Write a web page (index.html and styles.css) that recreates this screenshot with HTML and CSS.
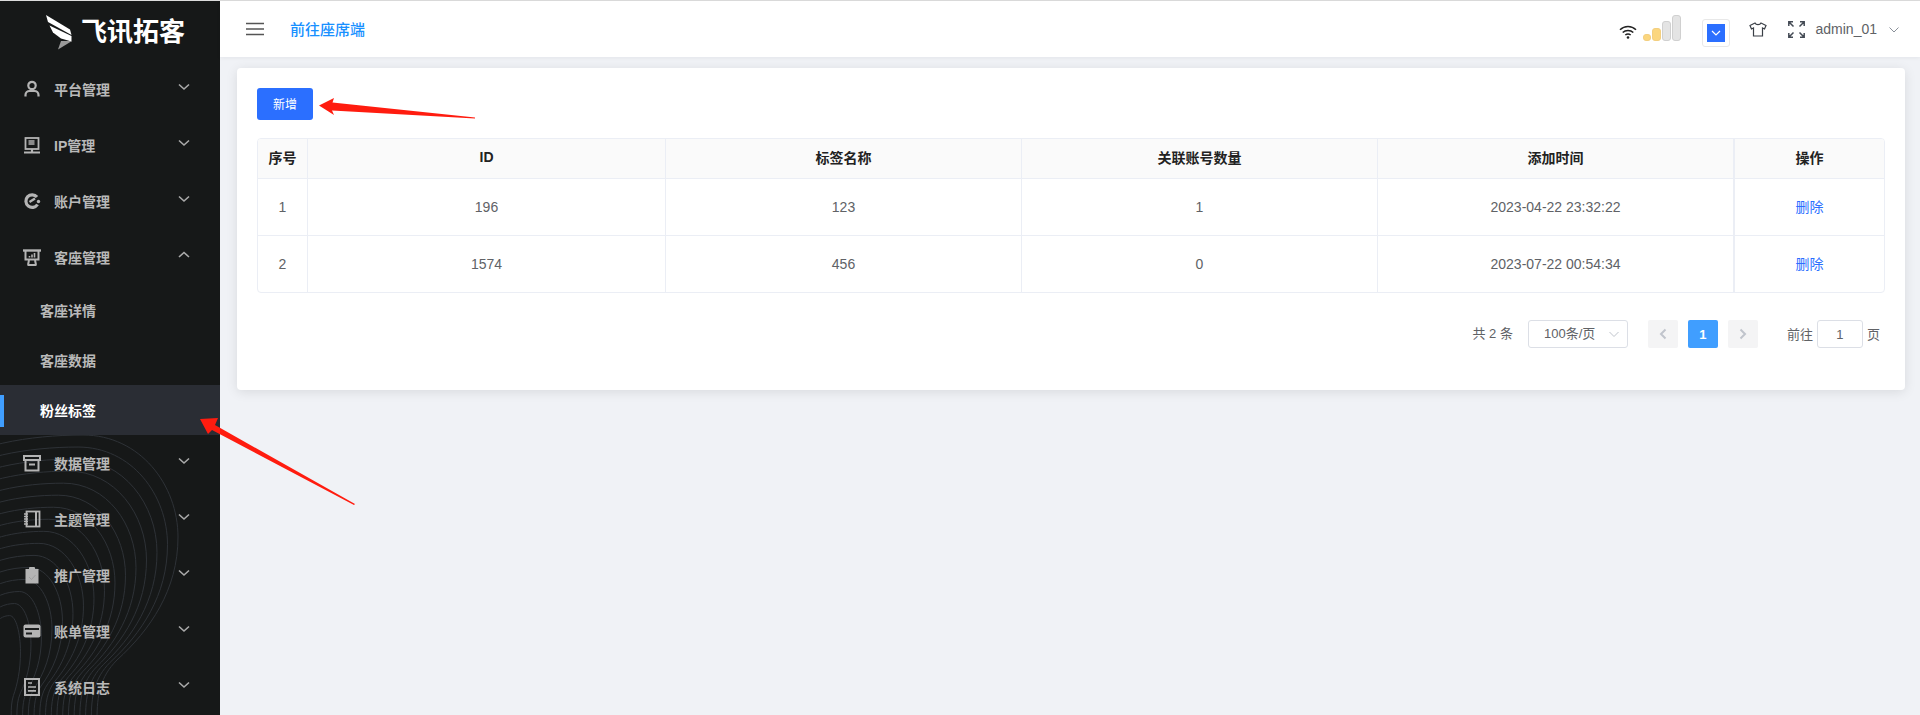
FILE: index.html
```html
<!DOCTYPE html>
<html lang="zh-CN">
<head>
<meta charset="utf-8">
<title>粉丝标签</title>
<link rel="stylesheet" href="styles.css">
</head>
<body>
<div class="app">
  <aside class="sidebar">
    <svg class="pattern" width="220" height="715" viewBox="0 0 220 715" fill="none" stroke="#2e3237" stroke-width="1">
      <defs><path id="contour" vector-effect="non-scaling-stroke" d="M-60 -245C-30 -270 30 -280 83 -280C140 -280 178 -230 178 -178C178 -125 150 -85 117 -55C100 -38 97 -20 97 5"/></defs>
      <use href="#contour" transform="translate(0 715) scale(1 1)"/>
      <use href="#contour" transform="translate(0 715) scale(.941 .957)"/>
      <use href="#contour" transform="translate(0 715) scale(.882 .914)"/>
      <use href="#contour" transform="translate(0 715) scale(.823 .871)"/>
      <use href="#contour" transform="translate(0 715) scale(.764 .828)"/>
      <use href="#contour" transform="translate(0 715) scale(.705 .785)"/>
      <use href="#contour" transform="translate(0 715) scale(.646 .742)"/>
      <use href="#contour" transform="translate(0 715) scale(.587 .699)"/>
      <use href="#contour" transform="translate(0 715) scale(.528 .656)"/>
      <use href="#contour" transform="translate(0 715) scale(.469 .613)"/>
      <use href="#contour" transform="translate(0 715) scale(.41 .57)"/>
      <use href="#contour" transform="translate(0 715) scale(.351 .527)"/>
      <use href="#contour" transform="translate(0 715) scale(.292 .484)"/>
      <use href="#contour" transform="translate(0 715) scale(.233 .441)"/>
      <use href="#contour" transform="translate(0 715) scale(.174 .398)"/>
      <use href="#contour" transform="translate(0 715) scale(.115 .355)"/>
    </svg>
    <div class="logo">
      <svg class="logo-mark" width="28" height="36" viewBox="0 0 28 36">
        <path fill="#fff" d="M0 0L24 14.5L25.5 20L2 7Z"/>
        <path fill="#fff" d="M3.5 10.5L25.5 21L25.5 26.5L15 23.5L7 17.5Z"/>
        <path fill="#9a9a9a" d="M12 34.500L15 26L26 26Z"/>
      </svg>
      <span class="logo-text">飞讯拓客</span>
    </div>
    <nav class="menu">
      <a class="item">
        <svg class="ic" viewBox="0 0 18 18" fill="none" stroke="#b4b4b4" stroke-width="2.200"><circle cx="9" cy="5.500" r="3.700"/><path d="M2.500 16.500V15c0-2.500 2-4 4-4h5c2 0 4 1.500 4 4v1.500"/></svg>
        <span>平台管理</span>
        <svg class="chev" viewBox="0 0 12 8" fill="none" stroke="#aaa" stroke-width="1.600"><path d="M1 1.500l5 4.500 5-4.500"/></svg>
      </a>
      <a class="item">
        <svg class="ic" viewBox="0 0 18 18" fill="none" stroke="#b4b4b4" stroke-width="1.800"><rect x="2.500" y="2" width="13" height="11"/><rect x="5.500" y="4" width="6" height="5" fill="#8a8a8a" stroke="none"/><path d="M9 13v3M1 16.500h16" stroke-width="2.200"/></svg>
        <span>IP管理</span>
        <svg class="chev" viewBox="0 0 12 8" fill="none" stroke="#aaa" stroke-width="1.600"><path d="M1 1.500l5 4.500 5-4.500"/></svg>
      </a>
      <a class="item">
        <svg class="ic" viewBox="0 0 18 18" fill="none" stroke="#b4b4b4" stroke-width="3.200"><path d="M14 5A6.300 6.300 0 1 0 14.500 12.500"/><path d="M6.500 10L12 6.500" stroke-width="2.400"/><circle cx="15.500" cy="9.500" r="1.700" fill="#b4b4b4" stroke="none"/></svg>
        <span>账户管理</span>
        <svg class="chev" viewBox="0 0 12 8" fill="none" stroke="#aaa" stroke-width="1.600"><path d="M1 1.500l5 4.500 5-4.500"/></svg>
      </a>
      <a class="item">
        <svg class="ic" viewBox="0 0 18 18" fill="none" stroke="#b4b4b4" stroke-width="2"><path d="M0 2.500h18" stroke-width="2.400"/><path d="M2.500 2.500v9h13v-9"/><path d="M6 12l-1 5M12 12l1 5M4.500 17h9"/><path d="M6.500 9.500V8M9 9.500V6.500M11.500 9.500V5" stroke-width="1.600"/></svg>
        <span>客座管理</span>
        <svg class="chev" viewBox="0 0 12 8" fill="none" stroke="#aaa" stroke-width="1.600"><path d="M1 6l5-4.500L11 6"/></svg>
      </a>
      <a class="sub">客座详情</a>
      <a class="sub">客座数据</a>
      <a class="sub active">粉丝标签</a>
      <a class="item">
        <svg class="ic" viewBox="0 0 18 18" fill="none" stroke="#b4b4b4" stroke-width="2"><rect x="1" y="2" width="16" height="4"/><path d="M2.500 6v10.500h13V6M6 10.500h6"/></svg>
        <span>数据管理</span>
        <svg class="chev" viewBox="0 0 12 8" fill="none" stroke="#aaa" stroke-width="1.600"><path d="M1 1.500l5 4.500 5-4.500"/></svg>
      </a>
      <a class="item">
        <svg class="ic" viewBox="0 0 18 18" fill="none" stroke="#b4b4b4" stroke-width="1.800"><rect x="3.500" y="1.500" width="13" height="15"/><path d="M13 1.500v15" stroke-width="2"/><path d="M1 4h4M1 6.500h4M1 9h4M1 11.500h4M1 14h4" stroke-width="1.300"/></svg>
        <span>主题管理</span>
        <svg class="chev" viewBox="0 0 12 8" fill="none" stroke="#aaa" stroke-width="1.600"><path d="M1 1.500l5 4.500 5-4.500"/></svg>
      </a>
      <a class="item">
        <svg class="ic" viewBox="0 0 18 18"><rect x="2.500" y="3" width="13" height="14.500" fill="#b4b4b4"/><rect x="6" y="1" width="6" height="4" rx="1" fill="#b4b4b4"/><path d="M6 11l2.500 2.500L12.500 9" fill="none" stroke="#999" stroke-width=".8"/></svg>
        <span>推广管理</span>
        <svg class="chev" viewBox="0 0 12 8" fill="none" stroke="#aaa" stroke-width="1.600"><path d="M1 1.500l5 4.500 5-4.500"/></svg>
      </a>
      <a class="item">
        <svg class="ic" viewBox="0 0 18 18"><rect x="0.500" y="2.500" width="17" height="13" rx="2" fill="#b4b4b4"/><path d="M2 7h14M3 11.500h6" fill="none" stroke="#1a1c1c" stroke-width="1.800"/></svg>
        <span>账单管理</span>
        <svg class="chev" viewBox="0 0 12 8" fill="none" stroke="#aaa" stroke-width="1.600"><path d="M1 1.500l5 4.500 5-4.500"/></svg>
      </a>
      <a class="item">
        <svg class="ic" viewBox="0 0 18 18" fill="none" stroke="#b4b4b4" stroke-width="2"><rect x="2" y="1" width="14" height="16"/><path d="M5 5h4M5 9h8M5 12.800h8" stroke-width="1.700"/></svg>
        <span>系统日志</span>
        <svg class="chev" viewBox="0 0 12 8" fill="none" stroke="#aaa" stroke-width="1.600"><path d="M1 1.500l5 4.500 5-4.500"/></svg>
      </a>
    </nav>
  </aside>

  <div class="right">
    <header class="topbar">
      <svg class="burger" width="18" height="14" viewBox="0 0 18 14" fill="none" stroke="#555" stroke-width="1.600"><path d="M0 1.500h18M0 7h18M0 12.500h18"/></svg>
      <a class="goto">前往座席端</a>
      <div class="tools">
        <svg class="wifi" width="18" height="14" viewBox="0 0 18 14" fill="none" stroke="#222" stroke-width="1.500"><path d="M1 4.800C5.500 .4 12.500 .4 17 4.800M3.700 7.500C6.500 4.800 11.500 4.800 14.300 7.500M6.300 10C7.800 8.800 10.200 8.800 11.700 10"/><circle cx="9" cy="12.500" r="1.300" fill="#222" stroke="none"/></svg>
        <div class="signal">
          <i class="bar b1"></i><i class="bar b2"></i><i class="bar b3"></i><i class="bar b4"></i>
        </div>
        <div class="color-pick">
          <div class="swatch"><svg width="10" height="6" viewBox="0 0 10 6" fill="none" stroke="#fff" stroke-width="1.200"><path d="M1 1l4 4 4-4"/></svg></div>
        </div>
        <svg class="shirt" width="18" height="15" viewBox="0 0 18 15" fill="#fff" stroke="#3a3f46" stroke-width="1.200"><path d="M6 1L1 3.500 2.500 7 4.500 6V14h9V6l2 1L17 3.500 12 1C11 3.200 7 3.200 6 1Z"/></svg>
        <svg class="full" width="17" height="17" viewBox="0 0 17 17" fill="none" stroke="#444b55" stroke-width="1.500"><path d="M.8 5V.8H5M12 .8h4.200V5M.8 12v4.200H5M12 16.200h4.200V12M1 1l4.500 4.500M16 1l-4.500 4.500M1 16l4.500-4.500M16 16l-4.500-4.500"/></svg>
        <span class="user">admin_01</span>
        <svg class="user-chev" width="10" height="6" viewBox="0 0 10 6" fill="none" stroke="#8a9099" stroke-width="1"><path d="M.5 .5L5 5 9.500 .5"/></svg>
      </div>
    </header>

    <main class="main">
      <section class="card">
        <button class="btn-add">新增</button>
        <div class="table-wrap">
          <table class="grid">
            <colgroup>
              <col class="c-idx"><col class="c-id"><col class="c-std"><col class="c-std"><col class="c-std"><col class="c-op">
            </colgroup>
            <thead>
              <tr><th>序号</th><th>ID</th><th>标签名称</th><th>关联账号数量</th><th class="fixed-edge">添加时间</th><th class="fixed">操作</th></tr>
            </thead>
            <tbody>
              <tr><td>1</td><td>196</td><td>123</td><td>1</td><td class="fixed-edge">2023-04-22 23:32:22</td><td class="fixed op"><a class="link">删除</a></td></tr>
              <tr class="last"><td>2</td><td>1574</td><td>456</td><td>0</td><td class="fixed-edge">2023-07-22 00:54:34</td><td class="fixed op"><a class="link">删除</a></td></tr>
            </tbody>
          </table>
        </div>
        <div class="pager">
          <span class="total">共 2 条</span>
          <div class="size">
            <span>100条/页</span>
            <svg width="12" height="7" viewBox="0 0 12 7" fill="none" stroke="#c0c4cc" stroke-width="1"><path d="M1.500 1L6 5.500 10.500 1"/></svg>
          </div>
          <span class="pg"><svg width="8" height="12" viewBox="0 0 8 12" fill="none" stroke="#c0c4cc" stroke-width="2"><path d="M6.500 1.500L2 6l4.500 4.500"/></svg></span>
          <span class="pg on">1</span>
          <span class="pg pg-last"><svg width="8" height="12" viewBox="0 0 8 12" fill="none" stroke="#c0c4cc" stroke-width="2"><path d="M1.500 1.500L6 6l-4.500 4.500"/></svg></span>
          <span class="jump">前往</span>
          <span class="jump-box">1</span>
          <span class="jump-end">页</span>
        </div>
      </section>
    </main>
  </div>

  <svg class="arrows" width="1920" height="715" viewBox="0 0 1920 715" fill="#ff1c0f">
    <polygon points="319,105.500 334,98 332.500,102.500 475,117.500 475,118.500 332,110.500 334,115"/>
    <polygon points="200,419 218,418 215,425 355,504 354,505 212,430 208,434"/>
  </svg>
</div>
</body>
</html>
```
FILE: styles.css
```css
* { box-sizing: border-box; }
html, body { margin: 0; height: 100%; }
body {
  font-family: "Liberation Sans", "Noto Sans CJK SC", sans-serif;
  font-size: 14px;
  color: #606266;
  background: #f0f2f6;
  overflow: hidden;
}
a { text-decoration: none; }

.app {
  position: relative;
  display: flex;
  height: 715px;
  border-top: 1px solid #dcdcdc;
}

/* sidebar */
.sidebar {
  position: relative;
  flex: 0 0 220px;
  background: #161818;
  overflow: hidden;
}
.pattern { position: absolute; left: 0; top: -1px; }
.logo {
  position: relative;
  height: 60px;
  display: flex;
  align-items: center;
  padding-left: 46px;
}
.logo-mark { flex: none; margin-top: 3px; }
.logo-text {
  margin-left: 7px;
  color: #fff;
  font-size: 26px;
  font-weight: 700;
  line-height: 1;
  margin-top: 1px;
  white-space: nowrap;
}
.menu { position: relative; }
.item, .sub {
  display: flex;
  align-items: center;
  color: #b9b9b9;
  font-weight: 700;
  font-size: 14px;
  white-space: nowrap;
}
.item { height: 56px; padding-left: 23px; }
.ic { width: 18px; height: 18px; flex: none; margin-right: 13px; }
.chev { width: 12px; height: 8px; flex: none; margin-left: auto; margin-right: 30px; margin-bottom: 4px; }
.sub { height: 50px; padding-left: 40px; position: relative; }
.sub.active { background: #2a2d34; color: #fff; }
.sub.active::before {
  content: "";
  position: absolute;
  left: 0;
  top: 10px;
  width: 4px;
  height: 32px;
  background: #409eff;
}

/* right */
.right { flex: 1; min-width: 0; display: flex; flex-direction: column; }
.topbar {
  position: relative;
  height: 56px;
  flex: none;
  background: #fff;
  display: flex;
  align-items: center;
  padding-left: 26px;
  box-shadow: 0 1px 4px rgba(0, 21, 41, .06);
}
.burger { flex: none; }
.goto { margin-left: 26px; color: #1890ff; font-size: 15px; font-weight: 500; padding-bottom: 2px; }
.tools { margin-left: auto; display: flex; align-items: center; padding-right: 21px; }
.wifi { flex: none; margin-top: 5px; }
.signal { display: flex; align-items: flex-end; gap: 1px; height: 26px; margin-left: 6px; margin-top: -3px; }
.bar { display: block; width: 9px; border-radius: 3px; border: 1px solid #d0d0d0; background: #e4e4e4; }
.b1 { height: 7px; width: 8px; background: #fbd67e; border-color: #f3cf80; }
.b2 { height: 13px; background: #fbd67e; border-color: #f3cf80; }
.b3 { height: 20px; }
.b4 { height: 26px; }
.color-pick {
  margin-left: 21px;
  width: 28px;
  height: 28px;
  border: 1px solid #e8e8e8;
  border-radius: 3px;
  display: flex;
  align-items: center;
  justify-content: center;
  margin-top: 8px;
}
.swatch {
  width: 18px;
  height: 18px;
  background: #2b6fff;
  display: flex;
  align-items: center;
  justify-content: center;
}
.shirt { flex: none; margin-left: 19px; }
.full { flex: none; margin-left: 21px; }
.user { margin-left: 11px; font-size: 14px; color: #606266; }
.user-chev { flex: none; margin-left: 12px; margin-top: 1px; }

.main { flex: 1; padding: 11px 15px 0 17px; }
.card {
  background: #fff;
  border-radius: 4px;
  padding: 20px 20px 42px;
  box-shadow: 0 2px 12px rgba(0, 0, 0, .1);
}
.btn-add {
  display: block;
  width: 56px;
  height: 32px;
  padding: 0 0 2px;
  border: 0;
  border-radius: 3px;
  background: #2b6fff;
  color: #fff;
  font-family: inherit;
  font-size: 12px;
  margin-bottom: 18px;
}
.table-wrap { border: 1px solid #ebeef5; border-radius: 4px; overflow: hidden; }
.grid { width: 100%; table-layout: fixed; border-collapse: separate; border-spacing: 0; }
.c-idx { width: 50px; }
.c-id { width: 358px; }
.c-std { width: 356px; }
.c-op { width: 150px; }
.grid th, .grid td {
  padding: 0;
  text-align: center;
  border-right: 1px solid #ebeef5;
  border-bottom: 1px solid #ebeef5;
}
.grid th {
  height: 40px;
  padding-bottom: 3px;
  background: #fafafa;
  color: #222;
  font-weight: 700;
  font-size: 14px;
}
.grid td { height: 57px; color: #606266; font-size: 14px; }
.grid .last td { height: 56px; border-bottom: 0; }
.grid .fixed { border-right: 0; border-left: 1px solid #ebeef5; }
.grid .op { padding-bottom: 3px; }
.link { color: #2b6fff; }

.pager {
  display: flex;
  justify-content: flex-end;
  align-items: center;
  height: 28px;
  margin-top: 27px;
  padding-right: 5px;
  font-size: 13px;
  color: #606266;
}
.total { margin-right: 15px; padding-bottom: 3px; }
.size {
  width: 100px;
  height: 28px;
  border: 1px solid #dcdfe6;
  border-radius: 3px;
  display: flex;
  align-items: center;
  justify-content: space-between;
  padding: 0 7px 0 15px;
  margin-right: 20px;
}
.size span { padding-bottom: 3px; }
.pg {
  width: 30px;
  height: 28px;
  border-radius: 2px;
  background: #f4f4f5;
  display: flex;
  align-items: center;
  justify-content: center;
  margin-right: 10px;
  font-weight: 700;
}
.pg.on { background: #409eff; color: #fff; }
.pg-last { margin-right: 29px; }
.jump { margin-right: 4px; padding-bottom: 2px; }
.jump-end { padding-bottom: 2px; }
.jump-box {
  width: 46px;
  height: 28px;
  border: 1px solid #dcdfe6;
  border-radius: 3px;
  display: flex;
  align-items: center;
  justify-content: center;
  margin-right: 4px;
}

.arrows { position: absolute; left: 0; top: -1px; pointer-events: none; }
```
